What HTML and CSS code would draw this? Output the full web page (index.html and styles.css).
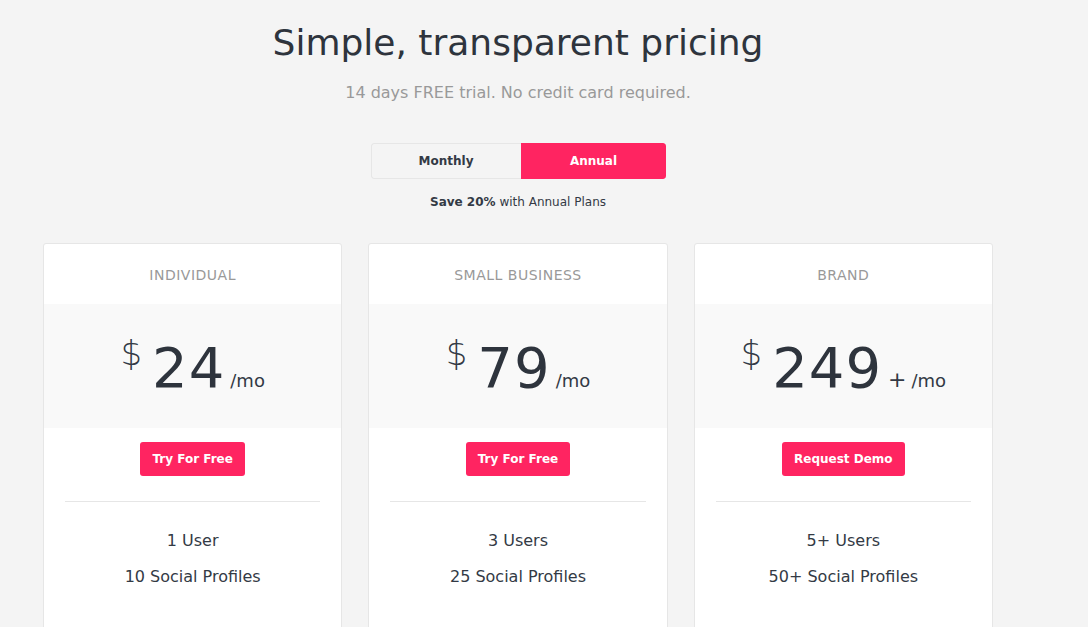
FILE: index.html
```html
<!DOCTYPE html>
<html lang="en">
<head>
<meta charset="utf-8">
<title>Pricing</title>
<link rel="stylesheet" href="styles.css">
</head>
<body>
<div class="pricing-wrap">
  <h1 class="pricing-title">Simple, transparent pricing</h1>
  <p class="pricing-sub">14 days FREE trial. No credit card required.</p>

  <div class="plan-switch">
    <span class="switch-btn">Monthly</span>
    <span class="switch-btn switch-active">Annual</span>
  </div>
  <p class="save-note"><b>Save 20%</b> with Annual Plans</p>

  <div class="plan-list">
    <div class="plan-box">
      <div class="plan-heading">INDIVIDUAL</div>
      <div class="plan-price"><span class="cur">$</span><span class="amount">24</span><span class="per">/mo</span></div>
      <div class="plan-action"><a class="plan-btn" href="#">Try For Free</a></div>
      <ul class="plan-features">
        <li>1 User</li>
        <li>10 Social Profiles</li>
      </ul>
    </div>
    <div class="plan-box">
      <div class="plan-heading">SMALL BUSINESS</div>
      <div class="plan-price"><span class="cur">$</span><span class="amount">79</span><span class="per">/mo</span></div>
      <div class="plan-action"><a class="plan-btn" href="#">Try For Free</a></div>
      <ul class="plan-features">
        <li>3 Users</li>
        <li>25 Social Profiles</li>
      </ul>
    </div>
    <div class="plan-box">
      <div class="plan-heading">BRAND</div>
      <div class="plan-price"><span class="cur">$</span><span class="amount">249</span><span class="plus">+</span><span class="per">/mo</span></div>
      <div class="plan-action"><a class="plan-btn" href="#">Request Demo</a></div>
      <ul class="plan-features">
        <li>5+ Users</li>
        <li>50+ Social Profiles</li>
      </ul>
    </div>
  </div>
</div>
</body>
</html>
```

FILE: styles.css
```css
body {
	margin: 0;
	background-color: #f4f4f4;
	font-family: "DejaVu Sans", "Open Sans", Arial, sans-serif;
	color: #333a45;
}
.pricing-wrap {
	width: 950px;
	margin-left: 43px;
	text-align: center;
}
.pricing-title {
	margin: 0;
	padding-top: 20px;
	font-size: 36px;
	line-height: 46px;
	font-weight: 400;
	color: #2e343d;
}
.pricing-sub {
	margin: 17px 0 0;
	font-size: 16px;
	line-height: 20px;
	color: #999;
}
.plan-switch {
	display: flex;
	width: 295px;
	height: 36px;
	margin: 40px auto 0;
	border-radius: 3px;
	overflow: hidden;
}
.switch-btn {
	flex: 0 0 150px;
	display: flex;
	align-items: center;
	justify-content: center;
	font-size: 12px;
	font-weight: bold;
	color: #333a45;
	border: 1px solid #e6e6e6;
	border-right: 0;
	border-radius: 3px 0 0 3px;
	box-sizing: border-box;
}
.switch-active {
	flex: 1;
	background-color: #ff2461;
	border-color: #ff2461;
	color: #fff;
	border-radius: 0 3px 3px 0;
}
.save-note {
	margin: 15px 0 0;
	font-size: 12px;
	line-height: 16px;
	color: #333a45;
}
.save-note b {
	font-weight: 600;
}
.plan-list {
	display: grid;
	grid-template-columns: repeat(3, 1fr);
	gap: 26px;
	margin-top: 33px;
}
.plan-box {
	background-color: #fff;
	border: 1px solid #e6e6e6;
	border-radius: 3px;
	padding-bottom: 40px;
}
.plan-heading {
	height: 60px;
	line-height: 62px;
	font-size: 14px;
	letter-spacing: 0.5px;
	color: #999;
}
.plan-price {
	background-color: #f9f9f9;
	height: 124px;
	display: flex;
	justify-content: center;
	align-items: baseline;
	line-height: 128px;
}
.plan-price .cur {
	font-size: 34px;
	font-weight: 300;
	position: relative;
	top: -22px;
	margin-right: 10px;
}
.plan-price .amount {
	font-size: 56px;
	color: #2e343d;
	letter-spacing: 1px;
}
.plan-price .plus {
	font-size: 22px;
	margin-left: 6px;
}
.plan-price .per {
	font-size: 18px;
	margin-left: 5px;
}
.plan-action {
	padding: 14px 0 25px;
	border-bottom: 1px solid #e6e6e6;
	margin: 0 21px;
}
.plan-btn {
	display: inline-block;
	background-color: #ff2461;
	color: #fff;
	font-size: 12px;
	font-weight: bold;
	text-decoration: none;
	padding: 0 12px;
	height: 34px;
	line-height: 34px;
	border-radius: 3px;
}
.plan-features {
	list-style: none;
	margin: 0;
	padding: 21px 0 0;
}
.plan-features li {
	font-size: 16px;
	line-height: 36px;
	color: #333a45;
}
```
